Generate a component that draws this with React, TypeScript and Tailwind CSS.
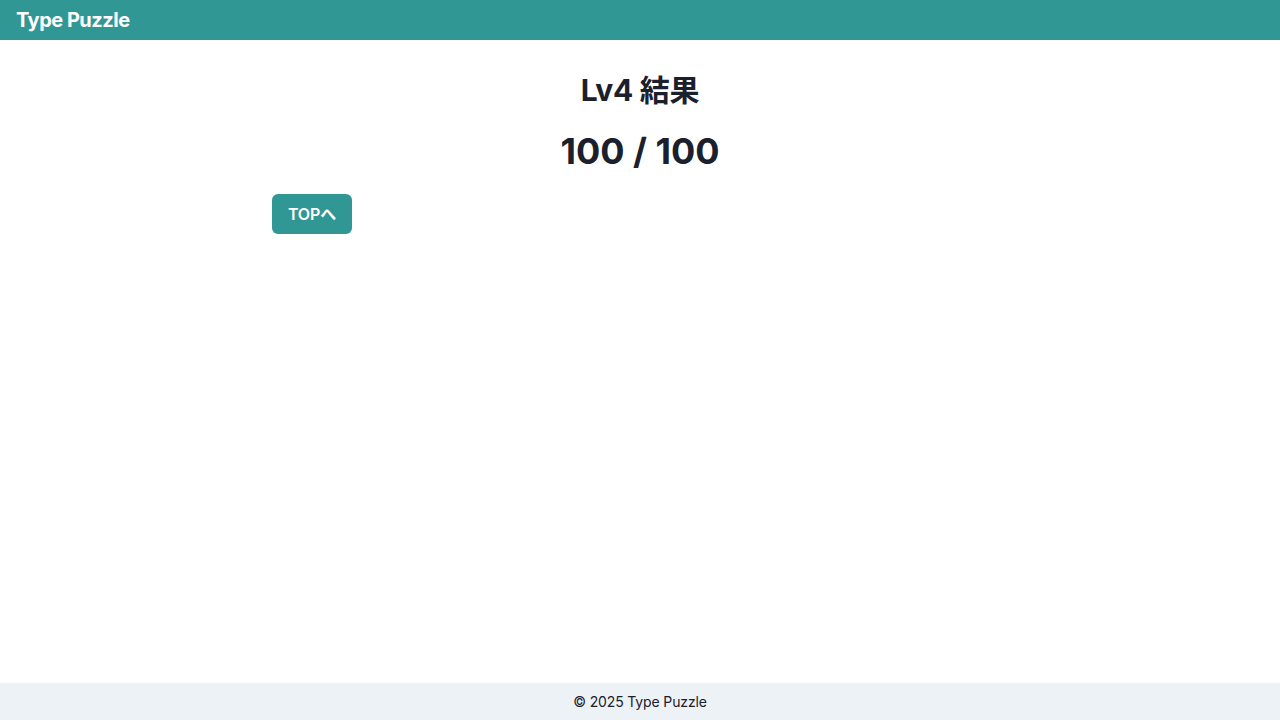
import React from 'react';

export default function App() {
  return (
    <div
      className="min-h-screen flex flex-col bg-white text-[#1a202c]"
      style={{ fontFamily: 'Inter, "Noto Sans CJK JP", sans-serif' }}
    >
      <header className="h-10 bg-[#319795] flex items-center px-4">
        <span className="text-white text-xl font-bold tracking-[-0.025em]">Type Puzzle</span>
      </header>

      <main className="flex-1">
        <div className="max-w-[768px] mx-auto px-4">
          <h1 className="mt-8 text-[30px] leading-[36px] font-bold text-center tracking-[-0.01em]">Lv4 結果</h1>
          <p className="mt-[22px] text-4xl leading-[43px] font-bold text-center">100 / 100</p>
          <button className="mt-[21px] h-10 w-20 rounded-md bg-[#319795] text-white font-semibold text-base tracking-[-0.01em]">
            TOPへ
          </button>
        </div>
      </main>

      <footer className="bg-[#edf2f7] py-2 text-center text-sm leading-[21px] tracking-[-0.01em]">
        © 2025 Type Puzzle
      </footer>
    </div>
  );
}
